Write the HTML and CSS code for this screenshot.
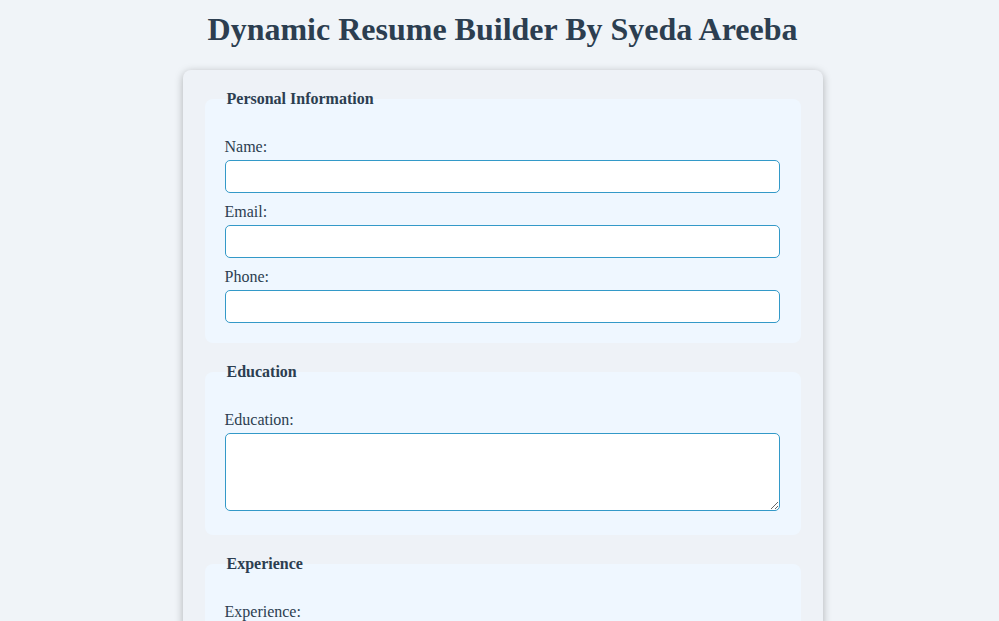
FILE: index.html
```html
<!DOCTYPE html>
<html lang="en">
<head>
<meta charset="utf-8">
<title>Dynamic Resume Builder</title>
<link rel="stylesheet" href="styles.css">
</head>
<body>
<h1 class="title">Dynamic Resume Builder By Syeda Areeba</h1>
<form class="card">
  <fieldset class="section">
    <legend class="section-title">Personal Information</legend>
    <label class="field-label" for="name">Name:</label>
    <input class="field-input" type="text" id="name">
    <label class="field-label" for="email">Email:</label>
    <input class="field-input" type="email" id="email">
    <label class="field-label" for="phone">Phone:</label>
    <input class="field-input" type="tel" id="phone">
  </fieldset>
  <fieldset class="section">
    <legend class="section-title">Education</legend>
    <label class="field-label" for="education">Education:</label>
    <textarea class="field-area" id="education"></textarea>
  </fieldset>
  <fieldset class="section">
    <legend class="section-title">Experience</legend>
    <label class="field-label" for="experience">Experience:</label>
    <textarea class="field-area" id="experience"></textarea>
  </fieldset>
</form>
</body>
</html>
```
FILE: styles.css
```css
html, body {
  margin: 0;
}
body {
  padding: 11px 0 40px 6px;
  background: #f0f4f8;
  color: #2c3e50;
  font-family: "Liberation Serif", "Times New Roman", serif;
  font-size: 16px;
}
.title {
  margin: 0 0 22px;
  text-align: center;
  font-size: 32px;
  font-weight: bold;
  color: #2c3e50;
}
.card {
  max-width: 600px;
  margin: 0 auto;
  padding: 20px;
  background: #eef2f7;
  border-radius: 8px;
  box-shadow: 0 2px 9px rgba(0, 0, 0, 0.28);
}
.section {
  margin: 0 2px 20px;
  padding: 20px;
  border: none;
  border-radius: 8px;
  background: #eff7ff;
}
.section-title {
  padding: 0 2px;
  font-weight: bold;
  font-size: 16px;
  color: #2c3e50;
}
.field-label {
  display: block;
  margin: 9.5px 0 4.3px;
  color: #2c3e50;
}
.field-input {
  display: block;
  box-sizing: border-box;
  width: calc(100% - 1px);
  height: 33.3px;
  padding: 8px;
  border: 1px solid #3399c8;
  border-radius: 5px;
  background: #fff;
  font-family: "Liberation Sans", Arial, sans-serif;
  font-size: 13.33px;
}
.field-area {
  box-sizing: border-box;
  width: calc(100% - 1px);
  height: 78px;
  padding: 8px;
  border: 1px solid #3399c8;
  border-radius: 5px;
  background: #fff;
  font-family: "Liberation Mono", monospace;
  font-size: 13.33px;
  vertical-align: baseline;
}
```
